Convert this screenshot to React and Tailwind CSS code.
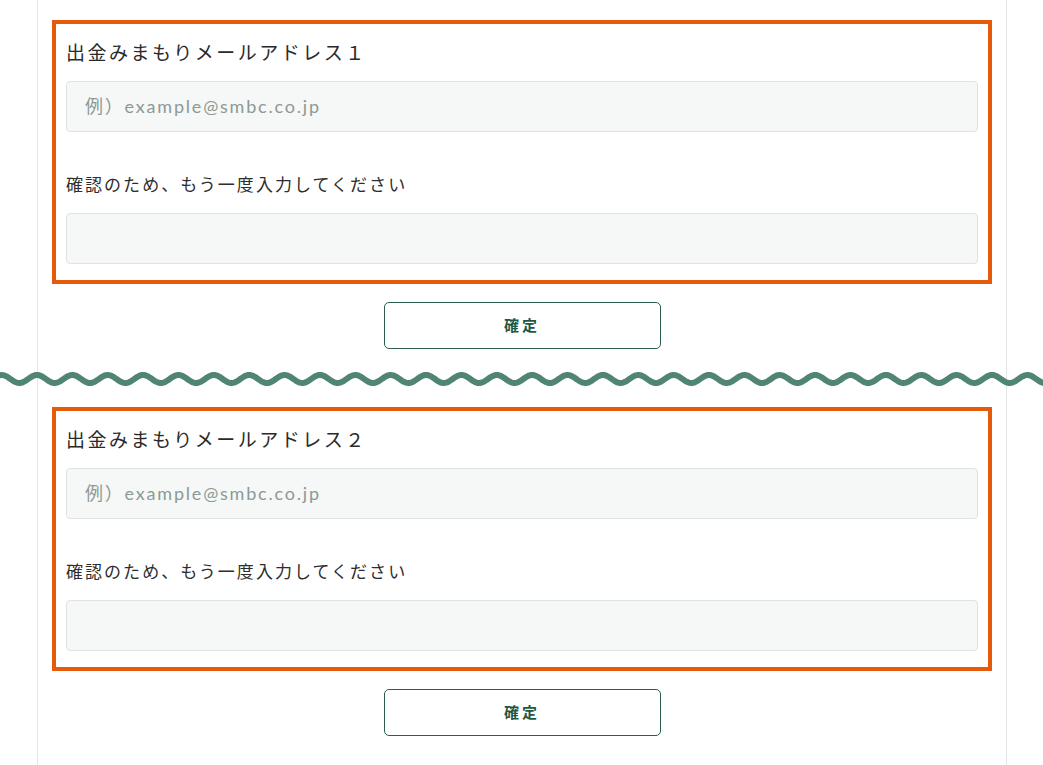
import React from "react";

const FONT = { fontFamily: "Lato, 'Noto Sans CJK JP', sans-serif" };

function Wave() {
  const P = 35.37;
  const pts = [];
  for (let x = -10; x <= 1060; x += 1) {
    const y = 30 - 4 * Math.cos((2 * Math.PI * (x - 1.63)) / P);
    pts.push(`${x === -10 ? "M" : "L"}${x},${y.toFixed(2)}`);
  }
  return (
    <svg width="1043" height="58" viewBox="0 0 1043 58" className="block">
      <path d={pts.join(" ")} fill="none" stroke="#4f8571" strokeWidth="6" strokeLinecap="round" />
    </svg>
  );
}

function Section({ n }) {
  return (
    <div className="flex flex-col items-center">
      <div className="w-full border-4 border-[#e55b0b] px-[10px] pt-[15px] pb-[16px]">
        <div className="h-[28px] leading-[28px] text-[19px] tracking-[0.13em] text-[#2a2a2a] font-normal">
          出金みまもりメールアドレス{n}
        </div>
        <div className="mt-[14px] h-[51px] rounded-[4px] border border-[#dfe3e2] bg-[#f6f7f7] flex items-center pl-[18px] text-[18px] tracking-[0.1em] text-[#8b9a95]">
          例）example@smbc.co.jp
        </div>
        <div className="mt-[39px] h-[28px] leading-[28px] text-[17px] tracking-[0.12em] text-[#2d2d2d]">
          確認のため、もう一度入力してください
        </div>
        <div className="mt-[14px] h-[51px] rounded-[4px] border border-[#dfe3e2] bg-[#f6f7f7]" />
      </div>
      <div className="mt-[18px] w-[277px] h-[47px] rounded-[5px] border border-[#2b5f4c] bg-white flex items-center justify-center text-[15px] font-bold tracking-[0.2em] text-[#1f5744]">
        確定
      </div>
    </div>
  );
}

export default function App() {
  return (
    <div className="w-[1043px] h-[765px] overflow-hidden bg-white" style={FONT}>
      <div className="ml-[37px] w-[970px] min-h-[765px] border-x border-[#e3e6e6] px-[14px] pt-[20px]">
        <Section n="１" />
        <div className="-mx-[52px] h-[58px]">
          <Wave />
        </div>
        <Section n="２" />
      </div>
    </div>
  );
}
